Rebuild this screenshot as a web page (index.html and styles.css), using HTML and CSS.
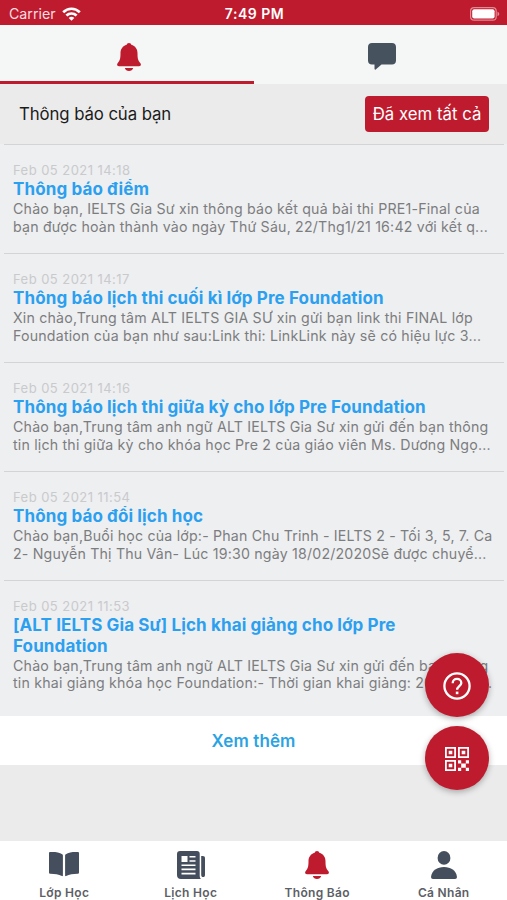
FILE: index.html
```html
<!DOCTYPE html>
<html lang="vi">

<head>
    <meta charset="UTF-8">
    <meta name="viewport" content="width=device-width, initial-scale=1.0">
    <title>Thông báo</title>
    <link rel="stylesheet" href="styles.css">
</head>

<body>
    <svg class="sprite" aria-hidden="true">
        <symbol id="icon-bell" viewBox="0 0 24 28">
            <path d="M12 0c1.3 0 2.1.8 2.3 1.700 4 1.200 6.200 4.300 6.200 8.500 0 5.500.7 7.400 2.700 9.700 1.300 1.500.7 3.300-1.200 3.300H2c-1.900 0-2.500-1.800-1.200-3.300 2-2.300 2.700-4.200 2.700-9.700C3.500 6 5.700 2.900 9.700 1.700 9.900.8 10.700 0 12 0z" />
            <path d="M7.800 25.100h8.400c-.5 1.800-2.200 2.900-4.200 2.900s-3.700-1.100-4.200-2.900z" />
        </symbol>
    </svg>

    <div class="screen">
        <div class="status-bar">
            <div class="carrier">
                <span>Carrier</span>
                <svg width="19" height="14" viewBox="0 0 19 14" fill="none" stroke="#fff" stroke-width="2.700">
                    <path d="M1.200 5.200C6 .6 13 .6 17.800 5.200" />
                    <path d="M4.400 8.500c2.900-2.700 7.300-2.700 10.200 0" />
                    <path d="M9.500 13.700 6.700 10.900c1.600-1.400 4-1.400 5.600 0z" fill="#fff" stroke="none" />
                </svg>
            </div>
            <span class="time">7:49 PM</span>
            <svg class="battery" width="30" height="14" viewBox="0 0 30 14">
                <rect x=".6" y=".6" width="25.600" height="12.600" rx="3.500" fill="none" stroke="#e08a95" stroke-width="1.200" />
                <rect x="2.200" y="2.200" width="22.400" height="9.400" rx="2" fill="#fff" />
                <path d="M27.500 4.700c2.300.7 2.300 3.700 0 4.400z" fill="#e08a95" />
            </svg>
        </div>

        <div class="tabs">
            <div class="tab active">
                <svg width="24" height="28"><use href="#icon-bell" /></svg>
            </div>
            <div class="tab">
                <svg width="28" height="27" viewBox="0 0 28 27">
                    <path d="M4 0h20c2.500 0 4 1.500 4 4v13.500c0 2.500-1.500 4-4 4H13.500l-5.800 4.900c-.7.500-1.200.2-1.200-.6v-4.300H4c-2.500 0-4-1.500-4-4V4c0-2.500 1.500-4 4-4z" />
                </svg>
            </div>
        </div>

        <div class="list-header">
            <h1>Thông báo của bạn</h1>
            <button type="button">Đã xem tất cả</button>
        </div>

        <div class="list">
            <div class="item">
                <div class="date">Feb 05 2021 14:18</div>
                <h2>Thông báo điểm</h2>
                <p>Chào bạn, IELTS Gia Sư xin thông báo kết quả bài thi PRE1-Final của<br>bạn được hoàn thành vào ngày Thứ Sáu, 22/Thg1/21 16:42 với kết q...</p>
            </div>
            <div class="item">
                <div class="date">Feb 05 2021 14:17</div>
                <h2>Thông báo lịch thi cuối kì lớp Pre Foundation</h2>
                <p>Xin chào,Trung tâm ALT IELTS GIA SƯ xin gửi bạn link thi FINAL lớp<br>Foundation của bạn như sau:Link thi: LinkLink này sẽ có hiệu lực 3...</p>
            </div>
            <div class="item">
                <div class="date">Feb 05 2021 14:16</div>
                <h2>Thông báo lịch thi giữa kỳ cho lớp Pre Foundation</h2>
                <p>Chào bạn,Trung tâm anh ngữ ALT IELTS Gia Sư xin gửi đến bạn thông<br>tin lịch thi giữa kỳ cho khóa học Pre 2 của giáo viên Ms. Dương Ngọ...</p>
            </div>
            <div class="item">
                <div class="date">Feb 05 2021 11:54</div>
                <h2>Thông báo đổi lịch học</h2>
                <p>Chào bạn,Buổi học của lớp:- Phan Chu Trinh - IELTS 2 - Tối 3, 5, 7. Ca<br>2- Nguyễn Thị Thu Vân- Lúc 19:30 ngày 18/02/2020Sẽ được chuyể...</p>
            </div>
            <div class="item">
                <div class="date">Feb 05 2021 11:53</div>
                <h2>[ALT IELTS Gia Sư] Lịch khai giảng cho lớp Pre<br>Foundation</h2>
                <p>Chào bạn,Trung tâm anh ngữ ALT IELTS Gia Sư xin gửi đến bạn thông<br>tin khai giảng khóa học Foundation:- Thời gian khai giảng: 20/02/20...</p>
            </div>
        </div>

        <div class="load-more">Xem thêm</div>

        <div class="floating">
            <div class="fab">
                <svg width="28" height="28" viewBox="0 0 28 28" fill="none" stroke="#fff" stroke-width="2.300">
                    <circle cx="14" cy="14" r="12.600" />
                    <path d="M9.700 11.200c0-2.600 1.900-4.300 4.300-4.300s4.300 1.700 4.300 4c0 3-4.200 3.500-4.200 6.900" />
                    <path d="M12.800 19.600h2.600v2.600h-2.600z" fill="#fff" stroke="none" />
                </svg>
            </div>
            <div class="fab">
                <svg width="24" height="24" viewBox="0 0 24 24" fill="#fff">
                    <path fill-rule="evenodd" d="M0 0h11v11H0zM1.800 1.800v7.400h7.400V1.800zM13 0h11v11H13zM14.800 1.800v7.400h7.400V1.800zM0 13h11v11H0zM1.800 14.800v7.400h7.400v-7.400z" />
                    <path d="M3.700 3.700h3.600v3.600H3.700zM16.700 3.700h3.600v3.600h-3.600zM3.700 16.700h3.600v3.600H3.700z" />
                    <path d="M13 13.200h3.200v3.200H13zM20.800 13.200H24v3.200h-3.200zM16.200 16.400h4.600v4.400h-4.600zM13 20.800h3.200V24H13zM20.800 20.800H24V24h-3.200z" />
                </svg>
            </div>
        </div>

        <div class="bottom-nav">
            <div class="nav-item">
                <svg width="30" height="28" viewBox="0 0 30 28">
                    <path d="M1.300 1C6 .8 10.500 1.300 13.200 3.200c.5.400.7.800.7 1.400v20c0 .6-.5.800-1 .5-3.200-1.700-7-2.200-11.400-2.300C.6 22.800 0 22.300 0 21.400V2.400C0 1.500.4 1 1.300 1z" />
                    <path d="M28.700 1C24 .8 19.500 1.300 16.800 3.200c-.5.400-.7.800-.7 1.400v20c0 .6.5.8 1 .5 3.200-1.700 7-2.200 11.400-2.300.9 0 1.500-.5 1.500-1.400V2.400c0-.9-.4-1.400-1.300-1.400z" />
                </svg>
                <span>Lớp Học</span>
            </div>
            <div class="nav-item">
                <svg width="28" height="28" viewBox="0 0 28 28">
                    <path d="M3 0h17c1.700 0 2.700 1 2.700 2.700V25c0 1.200.4 2.200 1.200 3H4c-2.600 0-4-1.500-4-4V3c0-1.900 1.100-3 3-3z" />
                    <path d="M24.200 5h1.500C27.200 5 28 5.800 28 7.300v16.400c0 1.600-.6 2.400-1.900 2.400s-1.900-.8-1.900-2.400z" />
                    <path d="M4.500 5h6v6h-6z" fill="#fff" />
                    <path d="M12.500 5.700h6M12.500 10h6M4.500 14.200h14M4.500 18.400h14M4.500 22.600h14" stroke="#fff" stroke-width="1.600" />
                </svg>
                <span>Lịch Học</span>
            </div>
            <div class="nav-item active">
                <svg width="24" height="28"><use href="#icon-bell" /></svg>
                <span>Thông Báo</span>
            </div>
            <div class="nav-item">
                <svg width="26" height="28" viewBox="0 0 26 28">
                    <ellipse cx="13" cy="6.900" rx="6.400" ry="6.900" />
                    <path d="M2 28c-1.500 0-2.100-1-1.900-2.500C1 19.500 6 16 13 16s12 3.500 12.900 9.500c.2 1.500-.4 2.500-1.900 2.500z" />
                </svg>
                <span>Cá Nhân</span>
            </div>
        </div>
    </div>
</body>

</html>
```

FILE: styles.css
```css
* {
    box-sizing: border-box;
    margin: 0;
    padding: 0;
}

body {
    font-family: Inter, "Noto Sans", sans-serif;
    background: #ebebeb;
}

svg {
    display: block;
}

.sprite {
    display: none;
}

.screen {
    position: relative;
    width: 507px;
    height: 900px;
    display: flex;
    flex-direction: column;
    overflow: hidden;
    white-space: nowrap;
}

.status-bar {
    height: 25px;
    padding: 2px 7px 0 9px;
    background: #be1c2e;
    color: #fff;
    display: grid;
    grid-template-columns: 1fr auto 1fr;
    align-items: center;
}

.carrier {
    display: flex;
    align-items: center;
    gap: 6px;
    font-size: 14.200px;
    color: #f8dde0;
}

.time {
    font-size: 14px;
    font-weight: 600;
    letter-spacing: 0.5px;
}

.battery {
    justify-self: end;
}

.tabs {
    height: 59px;
    background: #f5f6f6;
    display: flex;
}

.tab {
    flex: 1;
    display: flex;
    justify-content: center;
    padding: 18px 0 0 3px;
    fill: #47525f;
}

.tab.active {
    padding-left: 4px;
    fill: #be1c2e;
    border-bottom: 3px solid #be1c2e;
}

.list-header {
    height: 60px;
    padding: 0 18px 0 19px;
    display: flex;
    align-items: center;
    justify-content: space-between;
}

.list-header h1 {
    font-size: 16.800px;
    font-weight: 400;
    color: #1b1b1b;
    letter-spacing: -0.1px;
}

.list-header button {
    width: 124px;
    height: 36px;
    border: none;
    border-radius: 4px;
    background: #be1c2e;
    color: #fff;
    font-family: inherit;
    font-size: 16.800px;
}

.list {
    background: #eeeff1;
}

.item {
    position: relative;
    padding: 18.300px 13px 0;
    height: 109px;
}

.item:last-child {
    height: 136px;
}

.item::before {
    content: "";
    position: absolute;
    top: 0;
    left: 4px;
    right: 3px;
    height: 1px;
    background: #d2d4d6;
}

.date {
    font-size: 13px;
    line-height: 17px;
    color: #c9cacc;
    letter-spacing: 0.45px;
}

.item h2 {
    font-size: 17px;
    font-weight: 700;
    line-height: 20.700px;
    color: #2b9ff0;
    letter-spacing: 0.12px;
}

.item p {
    font-size: 14.200px;
    line-height: 17.600px;
    color: #7c7d7f;
    letter-spacing: 0.19px;
}

.load-more {
    height: 49px;
    background: #fff;
    color: #2ba3e3;
    font-size: 17px;
    font-weight: 600;
    letter-spacing: 0.1px;
    display: flex;
    align-items: center;
    justify-content: center;
}

.floating {
    position: absolute;
    right: 18px;
    bottom: 110px;
    display: flex;
    flex-direction: column;
    gap: 9px;
}

.fab {
    width: 64px;
    height: 64px;
    padding-top: 2px;
    border-radius: 50%;
    background: #be1c2e;
    box-shadow: 0 2px 6px rgba(0, 0, 0, 0.3);
    display: flex;
    align-items: center;
    justify-content: center;
}

.bottom-nav {
    margin-top: auto;
    height: 59px;
    padding-left: 1px;
    background: #fff;
    display: flex;
}

.nav-item {
    flex: 1;
    padding-top: 10px;
    display: flex;
    flex-direction: column;
    align-items: center;
    gap: 6px;
    fill: #454e5c;
    color: #5c6066;
    font-size: 12px;
    font-weight: 600;
    line-height: 15px;
    letter-spacing: 0.3px;
}

.nav-item.active {
    fill: #be1c2e;
}
```
